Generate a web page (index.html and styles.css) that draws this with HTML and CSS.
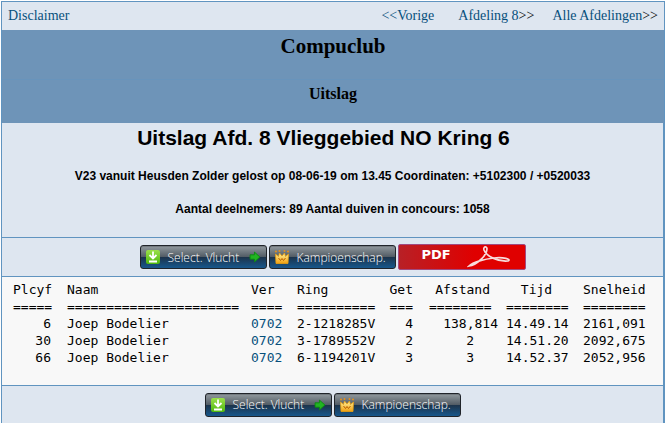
FILE: index.html
```html
<!DOCTYPE html>
<html lang="nl">
<head>
    <meta charset="UTF-8">
    <meta name="viewport" content="width=device-width, initial-scale=1.0">
    <title>Compuclub - Uitslag</title>
    <link rel="stylesheet" href="styles.css">
</head>
<body>
    <!-- Icons used by the buttons -->
    <svg class="defs" width="0" height="0" aria-hidden="true">
        <defs>
            <linearGradient id="green" x1="0" y1="0" x2="0" y2="1">
                <stop offset="0" stop-color="#9be04a"/>
                <stop offset="1" stop-color="#4fb80e"/>
            </linearGradient>
            <linearGradient id="gold" x1="0" y1="0" x2="0" y2="1">
                <stop offset="0" stop-color="#fff3a0"/>
                <stop offset="1" stop-color="#f0a010"/>
            </linearGradient>
        </defs>
        <symbol id="download" viewBox="0 0 14 14">
            <rect width="14" height="14" rx="2" fill="url(#green)"/>
            <path d="M7 1.500V8M3.500 5L7 8.500L10.500 5M3 11.500H11" fill="none" stroke="#fff" stroke-width="1.800"/>
        </symbol>
        <symbol id="arrow" viewBox="0 0 11 11">
            <path d="M1 3.500H5V1L10 5.500L5 10V7.500H1Z" fill="#22b422" stroke="#0a8a10" stroke-width="0.800"/>
        </symbol>
        <symbol id="crown" viewBox="0 0 14 14">
            <path d="M0.500 4L3.500 6.500L4.500 3L7 6L9.500 3L10.500 6.500L13.500 4L13 13.500H1Z" fill="url(#gold)" stroke="#e8a010" stroke-width="0.800"/>
            <path d="M3.500 8L5.500 10.500L7 8.500L8.500 10.500L10.500 8" fill="none" stroke="#b85f00"/>
            <circle cx="1" cy="1.500" r="1" fill="#e8901a"/>
            <circle cx="4.500" cy="1" r="1" fill="#e8901a"/>
            <circle cx="9.500" cy="1" r="1" fill="#e8901a"/>
            <circle cx="13" cy="1.500" r="1" fill="#e8901a"/>
        </symbol>
    </svg>

    <div class="page">
        <nav class="nav">
            <a href="#">Disclaimer</a>
            <div class="nav-links">
                <span class="previous"><a href="#">&lt;&lt;Vorige</a></span>
                <span><a href="#">Afdeling 8</a>&gt;&gt;</span>
                <span><a href="#">Alle Afdelingen</a>&gt;&gt;</span>
            </div>
        </nav>
        <header class="banner">
            <h1>Compuclub</h1>
            <h2>Uitslag</h2>
        </header>
        <main class="content">
            <section class="flight">
                <h2>Uitslag Afd. 8 Vlieggebied NO Kring 6</h2>
                <p>V23 vanuit Heusden Zolder gelost op 08-06-19 om 13.45 Coordinaten: +5102300 / +0520033</p>
                <p>Aantal deelnemers: 89 Aantal duiven in concours: 1058</p>
            </section>
            <div class="buttons">
                <button class="btn"><svg class="icon"><use href="#download"/></svg><span>Select. Vlucht</span><svg class="arrow"><use href="#arrow"/></svg></button>
                <button class="btn"><svg class="icon"><use href="#crown"/></svg><span>Kampioenschap.</span></button>
                <button class="btn-pdf">
                    <span>PDF</span>
                    <svg class="acrobat" viewBox="0 0 44 22">
                        <path d="M2 20C9 19 20 10 20 3C20 0 16 0 17 4C19 10 31 16 41 15C45 13 36 11 27 12C18 13 6 16 2 20Z" fill="none" stroke="#f8dcdc" stroke-width="1.700"/>
                    </svg>
                </button>
            </div>
            <div class="results">
                <table>
                    <thead>
                        <tr><th class="place">Plcyf</th><th class="name">Naam</th><th class="club">Ver</th><th class="ring">Ring</th><th class="get">Get</th><th class="distance">Afstand</th><th class="time">Tijd</th><th class="speed">Snelheid</th></tr>
                        <tr><td class="place">=====</td><td>======================</td><td>====</td><td>==========</td><td class="get">===</td><td class="distance">========</td><td class="time">========</td><td class="speed">========</td></tr>
                    </thead>
                    <tbody>
                        <tr><td class="place">6</td><td>Joep Bodelier</td><td><a href="#">0702</a></td><td>2-1218285V</td><td class="get">4</td><td class="distance full">138,814</td><td class="time">14.49.14</td><td class="speed">2161,091</td></tr>
                        <tr><td class="place">30</td><td>Joep Bodelier</td><td><a href="#">0702</a></td><td>3-1789552V</td><td class="get">2</td><td class="distance short">2</td><td class="time">14.51.20</td><td class="speed">2092,675</td></tr>
                        <tr><td class="place">66</td><td>Joep Bodelier</td><td><a href="#">0702</a></td><td>6-1194201V</td><td class="get">3</td><td class="distance short">3</td><td class="time">14.52.37</td><td class="speed">2052,956</td></tr>
                    </tbody>
                </table>
            </div>
            <div class="buttons bottom">
                <button class="btn"><svg class="icon"><use href="#download"/></svg><span>Select. Vlucht</span><svg class="arrow"><use href="#arrow"/></svg></button>
                <button class="btn"><svg class="icon"><use href="#crown"/></svg><span>Kampioenschap.</span></button>
            </div>
        </main>
    </div>
</body>
</html>
```
FILE: styles.css
```css
* {
    box-sizing: border-box;
}
body {
    margin: 0;
    padding: 1px 1px 0;
    background: #fff;
    color: #000;
    font-family: "Liberation Serif", "Times New Roman", serif;
}
.defs {
    position: absolute;
}
a {
    color: #07507c;
    text-decoration: none;
}
h1, h2, p {
    margin: 0;
}
.page {
    display: flex;
    flex-direction: column;
    min-height: calc(100vh - 1px);
    border: 1px solid #6094c0;
    border-bottom: none;
    background: #dee6f0;
}

/* Top navigation */
.nav {
    display: flex;
    justify-content: space-between;
    align-items: center;
    height: 28px;
    padding: 0 6px;
    font-size: 14px;
}
.nav-links {
    display: flex;
    gap: 18px;
}
.previous {
    margin-right: 6px;
}

/* Banner */
.banner {
    background: #6e94b8;
    text-align: center;
}
.banner h1 {
    height: 50px;
    padding-top: 4px;
    border-bottom: 1px solid #6894bc;
    font-size: 21px;
    line-height: 24px;
}
.banner h2 {
    height: 43px;
    padding-top: 4px;
    font-size: 16px;
    line-height: 20px;
}

.content {
    display: flex;
    flex-direction: column;
    flex: 1;
    border-right: 1px solid #6094c0;
}
.flight {
    padding: 2px 0 20px;
    font-family: "Liberation Sans", Arial, sans-serif;
    text-align: center;
}
.flight h2 {
    padding-right: 18px;
    font-size: 21px;
    line-height: 26px;
}
.flight p {
    margin-top: 17px;
    font-size: 12px;
    font-weight: bold;
    line-height: 16px;
}

/* Buttons */
.buttons {
    display: flex;
    justify-content: center;
    align-items: center;
    gap: 2px;
    height: 39px;
    border-top: 1px solid #6094c0;
}
.buttons.bottom {
    flex: 1;
}
.btn {
    display: flex;
    align-items: center;
    width: 127px;
    height: 24px;
    padding: 0 5px;
    border: 1px solid #20242a;
    border-radius: 3px;
    background: linear-gradient(to bottom, #929a9f 0%, #535d66 48%, #1c344c 52%, #17578c 100%);
    box-shadow: inset 0 1px 0 #747b80;
    color: #fff;
    font-family: "Open Sans", sans-serif;
    font-size: 12px;
    font-weight: 300;
    cursor: pointer;
}
.btn span {
    flex: 1;
    margin-left: 8px;
    text-align: left;
    white-space: nowrap;
}
.icon {
    flex: none;
    width: 14px;
    height: 14px;
}
.arrow {
    flex: none;
    width: 12px;
    height: 12px;
}
.btn-pdf {
    display: flex;
    align-items: center;
    justify-content: space-between;
    width: 128px;
    height: 26px;
    padding: 0 14px 0 23px;
    border: 1px solid #a04a80;
    border-radius: 2px;
    background: linear-gradient(to right, #b82026, #e00000 60%);
    color: #fff;
    font-family: "DejaVu Sans", sans-serif;
    font-size: 13px;
    font-weight: bold;
    line-height: 14px;
    cursor: pointer;
}
.btn-pdf span {
    padding-bottom: 4px;
}
.acrobat {
    width: 44px;
    height: 22px;
}

/* Results */
.results {
    padding: 4px 10px 19px 11px;
    border-top: 1px solid #6094c0;
    background: #f8f8f8;
}
table {
    width: 100%;
    border-collapse: collapse;
    table-layout: fixed;
    font-family: "DejaVu Sans Mono", monospace;
    font-size: 13px;
    line-height: 17px;
    text-align: left;
    white-space: nowrap;
}
th, td {
    padding: 0;
    font-weight: normal;
}
.place {
    width: 54px;
    padding-right: 16px;
    text-align: right;
}
.name {
    width: 184px;
}
.club {
    width: 46px;
}
.ring {
    width: 92px;
}
.get {
    width: 40px;
    padding-right: 16px;
    text-align: right;
}
.distance {
    width: 77px;
    padding-right: 16px;
    text-align: right;
}
.distance.full {
    padding-right: 8px;
}
.distance.short {
    padding-right: 32px;
}
.time {
    width: 77px;
    padding-right: 16px;
    text-align: center;
}
.speed {
    padding-right: 10px;
    text-align: right;
}
```
